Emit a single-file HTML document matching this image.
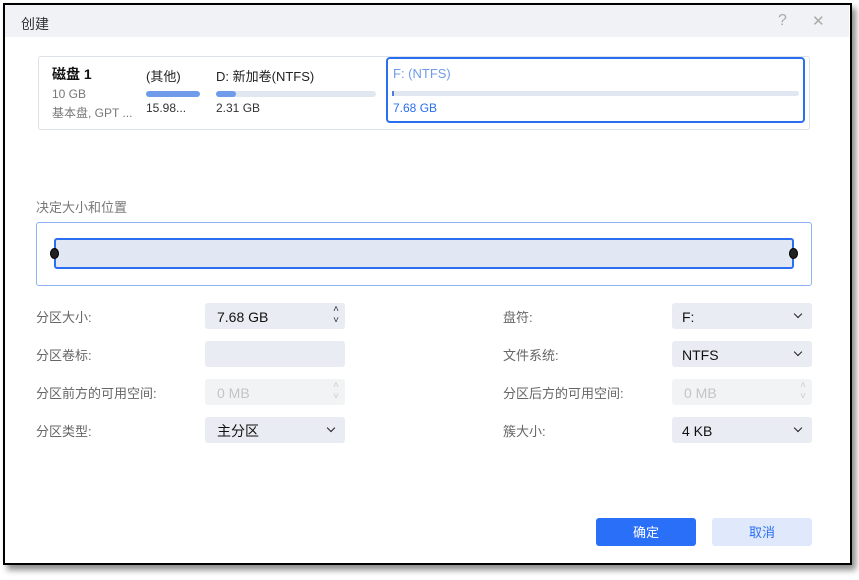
<!DOCTYPE html>
<html><head><meta charset="utf-8"><style>
*{margin:0;padding:0;box-sizing:border-box}
body{width:859px;height:580px;background:#fff;position:relative;overflow:hidden;font-family:"Liberation Sans","Noto Sans CJK SC",sans-serif;}
.a{position:absolute}
.win{left:3px;top:3px;width:849px;height:562px;border:2px solid #000;background:#fff;box-shadow:4px 5px 6px rgba(0,0,0,.45)}
.lbl{font-size:13px;color:#666;}
.f{background:#e9ecf2;border-radius:3px;height:26px;width:140px;font-size:14px;color:#111;padding-left:12px;line-height:28px}
.dis{background:#f2f3f5;color:#c4c4c4}
.chev{position:absolute;right:11px;top:8px;width:6px;height:6px;border-right:1.6px solid #222;border-bottom:1.6px solid #222;transform:rotate(45deg)}
.sp{position:absolute;right:6px;font-size:10px;line-height:10px;color:#333}
</style></head><body>
<div class="a win"></div>
<div class="a" style="left:5px;top:5px;width:844px;height:32px;background:#f1f2f5"></div>
<div class="a" style="left:21px;top:14px;font-size:14px;color:#333">创建</div>
<div class="a" style="left:778px;top:12px;font-size:16px;color:#aaa">?</div>
<div class="a" style="left:812px;top:12px;font-size:15px;color:#aaa">✕</div>

<div class="a" style="left:38px;top:56px;width:772px;height:74px;border:1px solid #dde1e8;border-radius:3px"></div>
<div class="a" style="left:52px;top:64px;font-size:14px;font-weight:bold;color:#111">磁盘 1</div>
<div class="a" style="left:52px;top:87px;font-size:12px;color:#777">10 GB</div>
<div class="a" style="left:52px;top:104px;font-size:12px;color:#777">基本盘, GPT ...</div>
<div class="a" style="left:146px;top:66px;font-size:13px;color:#222">(其他)</div>
<div class="a" style="left:146px;top:91px;width:54px;height:6px;border-radius:3px;background:#6f9bea"></div>
<div class="a" style="left:146px;top:101px;font-size:12px;color:#333">15.98...</div>
<div class="a" style="left:216px;top:66px;font-size:13px;color:#222">D: 新加卷(NTFS)</div>
<div class="a" style="left:216px;top:91px;width:160px;height:6px;border-radius:3px;background:#e1e7f1"></div>
<div class="a" style="left:216px;top:91px;width:20px;height:6px;border-radius:3px;background:#6f9bea"></div>
<div class="a" style="left:216px;top:101px;font-size:12px;color:#333">2.31 GB</div>
<div class="a" style="left:386px;top:57px;width:419px;height:66px;border:2px solid #2a6ff0;border-radius:4px"></div>
<div class="a" style="left:393px;top:66px;font-size:13px;color:#6f9bea">F: (NTFS)</div>
<div class="a" style="left:392px;top:91px;width:407px;height:5px;border-radius:3px;background:#e1e7f1"></div>
<div class="a" style="left:392px;top:91px;width:2px;height:5px;background:#4a7fe0"></div>
<div class="a" style="left:393px;top:101px;font-size:12px;color:#2a6ff0">7.68 GB</div>

<div class="a" style="left:36px;top:197px;font-size:13px;color:#777">决定大小和位置</div>
<div class="a" style="left:36px;top:222px;width:776px;height:64px;border:1px solid #8fb2f5;border-radius:3px"></div>
<div class="a" style="left:54px;top:238px;width:740px;height:31px;border:2px solid #2a6ff0;border-radius:3px;background:#e1e7f3"></div>
<div class="a" style="left:50px;top:248px;width:9px;height:11px;border-radius:50%;background:#222;border:1.5px solid #000"></div>
<div class="a" style="left:789px;top:248px;width:9px;height:11px;border-radius:50%;background:#222;border:1.5px solid #000"></div>

<div class="a lbl" style="left:36px;top:307px">分区大小:</div>
<div class="a lbl" style="left:36px;top:345px">分区卷标:</div>
<div class="a lbl" style="left:36px;top:383px">分区前方的可用空间:</div>
<div class="a lbl" style="left:36px;top:421px">分区类型:</div>
<div class="a f" style="left:205px;top:303px">7.68 GB<span class="sp" style="top:2px">˄</span><span class="sp" style="top:13px">˅</span></div>
<div class="a f" style="left:205px;top:341px"></div>
<div class="a f dis" style="left:205px;top:379px">0 MB<span class="sp" style="top:2px;color:#ccc">˄</span><span class="sp" style="top:13px;color:#ccc">˅</span></div>
<div class="a f" style="left:205px;top:417px">主分区<span class="chev"></span></div>

<div class="a lbl" style="left:503px;top:307px">盘符:</div>
<div class="a lbl" style="left:503px;top:345px">文件系统:</div>
<div class="a lbl" style="left:503px;top:383px">分区后方的可用空间:</div>
<div class="a lbl" style="left:503px;top:421px">簇大小:</div>
<div class="a f" style="left:672px;top:303px;padding-left:10px">F:<span class="chev"></span></div>
<div class="a f" style="left:672px;top:341px;padding-left:10px">NTFS<span class="chev"></span></div>
<div class="a f dis" style="left:672px;top:379px">0 MB<span class="sp" style="top:2px;color:#ccc">˄</span><span class="sp" style="top:13px;color:#ccc">˅</span></div>
<div class="a f" style="left:672px;top:417px;padding-left:10px">4 KB<span class="chev"></span></div>

<div class="a" style="left:596px;top:518px;width:100px;height:28px;background:#2a6ff7;border-radius:3px;color:#fff;font-size:13px;text-align:center;line-height:30px">确定</div>
<div class="a" style="left:712px;top:518px;width:100px;height:28px;background:#dfe9fb;border-radius:3px;color:#2a6ff0;font-size:13px;text-align:center;line-height:30px">取消</div>
</body></html>
